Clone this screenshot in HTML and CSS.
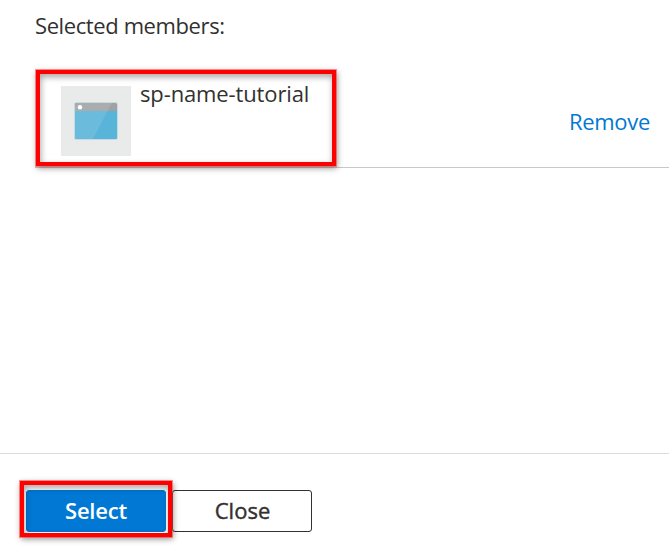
FILE: index.html
```html
<!DOCTYPE html>
<html lang="en">
<head>
<meta charset="utf-8">
<title>Selected members</title>
<link rel="stylesheet" href="styles.css">
</head>
<body>
<main class="panel">
  <section class="members">
    <h2 class="heading">Selected members:</h2>
    <div class="member">
      <div class="avatar">
        <svg width="44" height="38" viewBox="0 0 44 38">
          <rect width="44" height="38" rx="2.500" fill="#c2dce6"/>
          <path d="M1 9H43V35.500Q43 37 41.500 37H2.500Q1 37 1 35.500Z" fill="#59b4d9"/>
          <path d="M1 9V2.500Q1 1 2.500 1H41.500Q43 1 43 2.500V9Z" fill="#a0a1a2"/>
          <path d="M1 9V2.500Q1 1 2.500 1H38L33.500 9Z" fill="#abacad"/>
          <path d="M1 9H33.500L19 37H2.500Q1 37 1 35.500Z" fill="#6bbbdd"/>
          <circle cx="6" cy="5.200" r="2.200" fill="#fff"/>
        </svg>
      </div>
      <span class="name">sp-name-tutorial</span>
      <a class="remove">Remove</a>
      <div class="highlight highlight-member"></div>
    </div>
  </section>
  <footer class="footer">
    <button class="button primary">Select</button>
    <button class="button secondary">Close</button>
    <div class="highlight highlight-select"></div>
  </footer>
</main>
</body>
</html>
```
FILE: styles.css
```css
* { box-sizing: border-box; }
body {
  margin: 0;
  background: #fff;
  color: #323130;
  font-family: "Open Sans", "Noto Sans", sans-serif;
  font-size: 22px;
  line-height: 30px;
  overflow: hidden;
}
.panel {
  display: flex;
  flex-direction: column;
  height: 555px;
}
.members {
  flex: 1;
  padding: 10px 0 0 35px;
}
.heading {
  margin: 0 0 1px;
  font-size: 22px;
  font-weight: 400;
  letter-spacing: -0.4px;
}
.member {
  position: relative;
  display: flex;
  align-items: flex-start;
  height: 127px;
  padding: 45px 19px 0 26px;
  border-bottom: 1px solid #c8c8c8;
}
.avatar {
  display: flex;
  align-items: center;
  justify-content: center;
  width: 70px;
  height: 70px;
  background: #e9ebea;
}
.name {
  margin: -8px 0 0 9px;
  letter-spacing: -0.13px;
}
.remove {
  margin: 20px 0 0 auto;
  color: #0078d4;
  letter-spacing: -0.3px;
}
.footer {
  position: relative;
  display: flex;
  align-items: flex-start;
  gap: 6px;
  height: 102px;
  padding: 36px 26px 0;
  border-top: 1px solid #dcdcdc;
}
.button {
  width: 140px;
  height: 42px;
  padding: 0 0 2px;
  border: 1px solid #323130;
  border-radius: 3px;
  background: #fff;
  color: #323130;
  font: 600 22px/38px "Open Sans", "Noto Sans", sans-serif;
  letter-spacing: -0.2px;
}
.primary {
  border-color: #0078d4;
  background: #0078d4;
  color: #fff;
}
.secondary {
  padding-left: 1px;
  font-weight: 400;
  letter-spacing: 0;
  -webkit-text-stroke: 0.4px #323130;
}
.highlight {
  position: absolute;
  border: 4px solid #f00;
  outline: 1px solid rgba(255, 60, 60, 0.55);
  box-shadow: 1px 2px 6px rgba(0, 0, 0, 0.45), inset 1px 3px 6px rgba(0, 0, 0, 0.35);
  pointer-events: none;
}
.highlight-member {
  left: 1px;
  top: 29px;
  width: 300px;
  height: 96px;
}
.highlight-select {
  left: 20px;
  top: 27px;
  width: 152px;
  height: 56px;
}
```
